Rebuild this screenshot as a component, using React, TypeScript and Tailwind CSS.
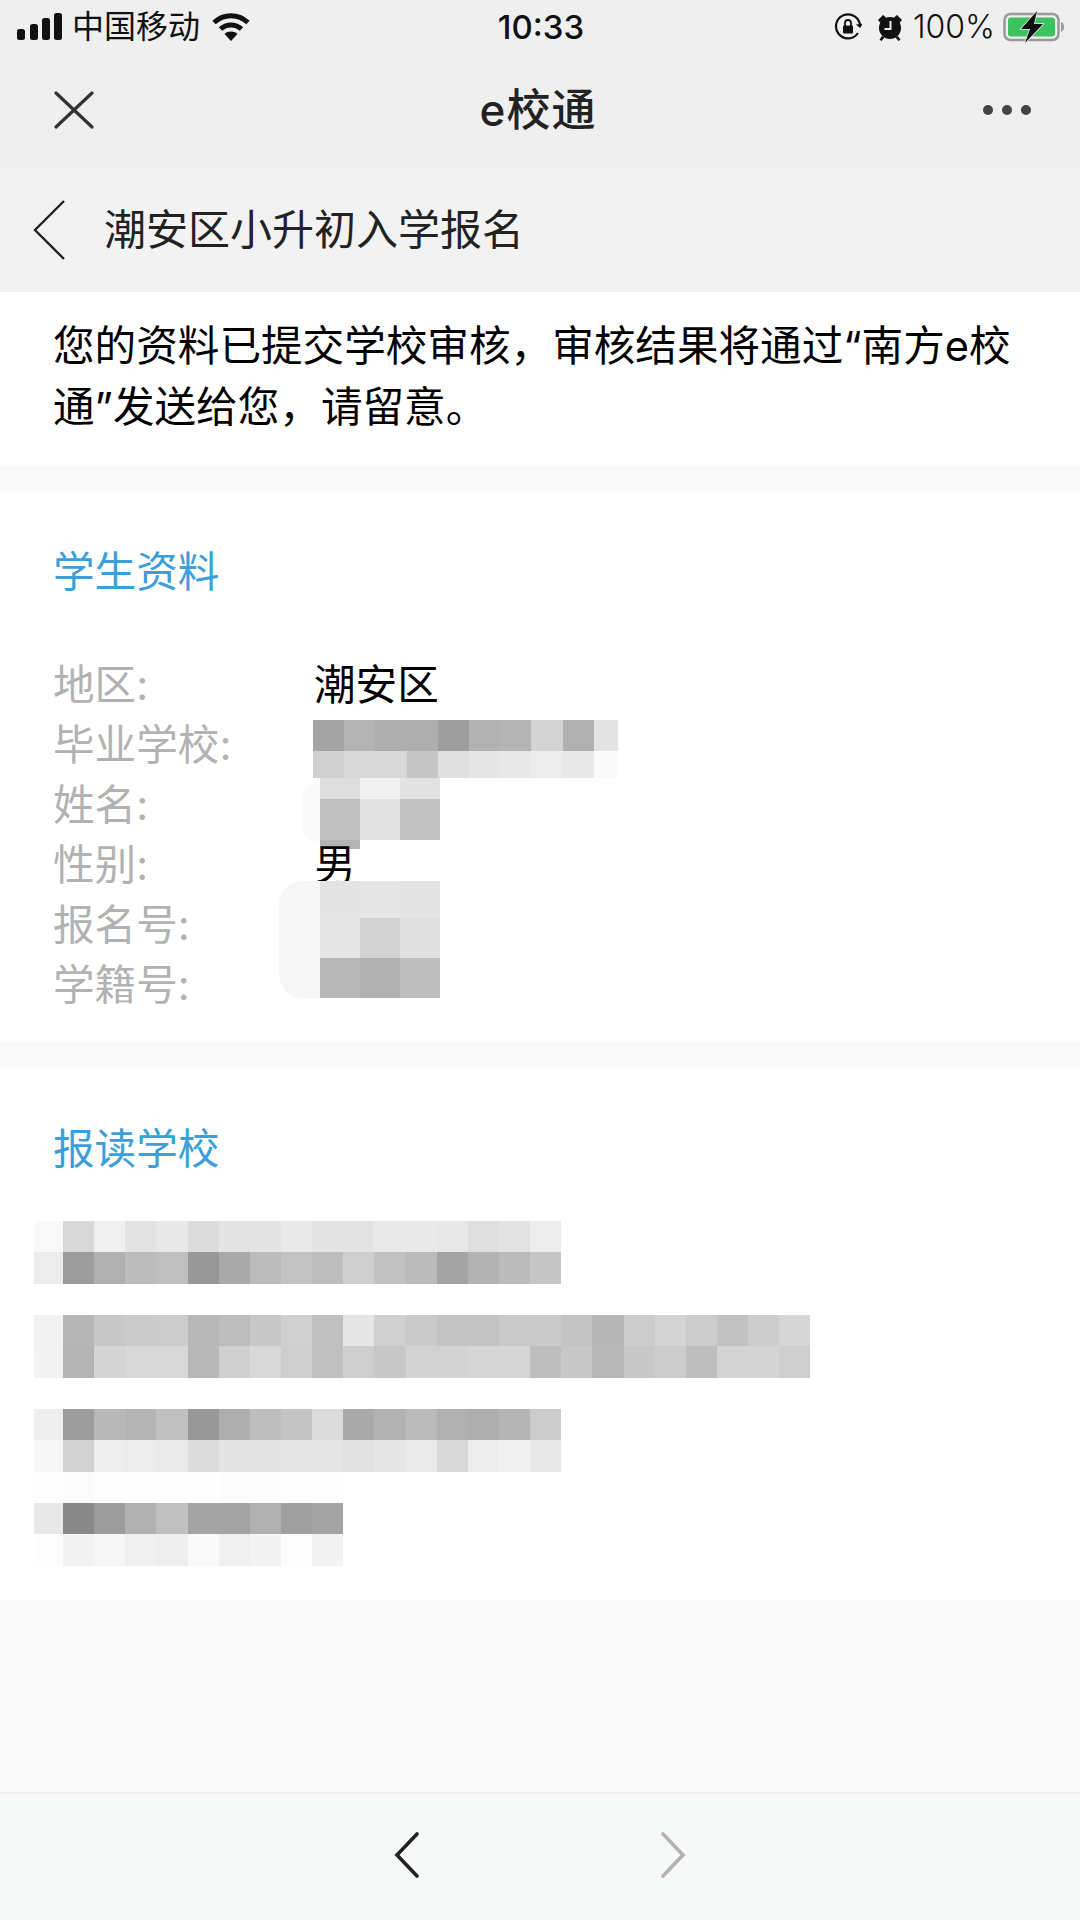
const FONT = "font-['Inter','Noto_Sans_CJK_SC',sans-serif]";

// pixelated school block: each row is a list of gray levels, null row is just a gap
const schoolRows: (string[] | null)[] = [
  ["f9", "d8", "f0", "e3", "e8", "dc", "e4", "e4", "e9", "e3", "e3", "e9", "e9", "e7", "df", "e3", "ec"],
  ["ec", "9c", "b0", "bc", "bf", "98", "a9", "bc", "c3", "bd", "cf", "c1", "bb", "a4", "b2", "bb", "c6"],
  null,
  ["f2", "b6", "c8", "cb", "cc", "b8", "bd", "c8", "d0", "c0", "e6", "d0", "ca", "c4", "c4", "ca", "ca", "c4", "b6", "cc", "d4", "cc", "c2", "cd", "d6"],
  ["f3", "b4", "d4", "d8", "d8", "b8", "cf", "d8", "ce", "c0", "ce", "c8", "d2", "d2", "d6", "d6", "be", "c8", "b8", "c8", "cc", "be", "d4", "d4", "ce"],
  null,
  ["ef", "9c", "b8", "b4", "c0", "98", "ae", "be", "c4", "dc", "aa", "b2", "ba", "b0", "ae", "b4", "cc"],
  ["f7", "d2", "ee", "ec", "ea", "dc", "e4", "e4", "e6", "e6", "e2", "e6", "ea", "d8", "ec", "f0", "e8"],
  ["fe", "fc", "fe", "fd", "fd", "fe", "fc", "fc", "fd", "fd"],
  ["e8", "88", "9c", "b0", "c0", "a4", "a4", "b0", "a0", "a4"],
  ["fd", "f3", "f6", "f0", "ee", "f9", "f0", "f3", "fd", "f3"],
];

const gray = (g: string) => ({ backgroundColor: `#${g}${g}${g}` });

function SchoolRow({ cells }: { cells: string[] | null }) {
  return (
    <div className="flex h-[31.33px]">
      {cells?.map((g, i) => (
        <div key={i} className={i === 0 ? "w-[29px]" : "w-[31.15px]"} style={gray(g)} />
      ))}
    </div>
  );
}

function MosaicRow({ cells, height, width }: { cells: string[]; height: string; width: string }) {
  return (
    <div className={`flex ${height}`}>
      {cells.map((g, i) => (
        <div key={i} className={i === 9 ? "w-[24px]" : width} style={gray(g)} />
      ))}
    </div>
  );
}

function StatusBar() {
  return (
    <div className="grid grid-cols-3 items-center h-[54px] pl-[17px] pr-[15px] text-[#111]">
      <div className="flex items-center">
        <svg width="45" height="28" viewBox="0 0 45 28" fill="#111">
          <rect x="0" y="16" width="8" height="11" rx="2.5" />
          <rect x="13" y="11" width="8" height="16" rx="2.5" />
          <rect x="25" y="5" width="8" height="22" rx="2.5" />
          <rect x="37" y="0" width="8" height="27" rx="2.5" />
        </svg>
        <span className="ml-[10px] text-[32px] leading-[40px]">中国移动</span>
        <svg className="ml-[12px] mb-[1px]" width="38" height="28" viewBox="0 0 38 28" fill="none" stroke="#111" strokeWidth="5">
          <path d="M2 9.5C12 .5 26 .5 36 9.5" />
          <path d="M8.5 16C14.5 10.5 23.5 10.5 29.5 16" />
          <path d="M19 28l-6.5-7c3.5-3.2 9.5-3.2 13 0z" fill="#111" stroke="none" />
        </svg>
      </div>
      <div className="text-center text-[33px] leading-[40px] font-medium">10:33</div>
      <div className="flex items-center justify-end">
        <svg width="28" height="28" viewBox="0 0 28 28" fill="none" stroke="#111" strokeWidth="2.2">
          <path d="M24 20A12 12 0 1 1 26 13" />
          <path d="M22 11.5l4 3.5 3-4.5z" fill="#111" stroke="none" />
          <rect x="9" y="12.5" width="10" height="8" rx="1" fill="#111" stroke="none" />
          <path d="M11 13V10a3 3 0 0 1 6 0v3" strokeWidth="1.8" />
        </svg>
        <svg className="ml-[15px]" width="26" height="28" viewBox="0 0 26 28" fill="#111">
          <circle cx="13" cy="15" r="11" />
          <path d="M1 7l5-5 3 2.5-5.5 5.5zM25 7l-5-5-3 2.5 5.5 5.5zM5 23l-2.5 3.5 2 1.5 3-3.5zM21 23l2.5 3.5-2 1.5-3-3.5z" />
          <path d="M13.5 8v8H7.5" fill="none" stroke="#eee" strokeWidth="2" />
        </svg>
        <span className="ml-[10px] text-[32px] leading-[40px] font-light">100%</span>
        <svg className="ml-[8px]" width="62" height="32" viewBox="0 0 62 32">
          <rect x="1.5" y="3" width="54" height="26" rx="6" fill="none" stroke="#999" strokeWidth="2.5" />
          <rect x="5" y="6.5" width="47" height="19" rx="3" fill="#3cc35f" />
          <path d="M58 11c2 .5 3 2.5 3 5s-1 4.5-3 5z" fill="#999" />
          <path d="M34 0L18 18h9l-5 14 18-19h-9z" fill="#111" stroke="#efefef" strokeWidth="1.5" paintOrder="stroke" />
        </svg>
      </div>
    </div>
  );
}

export default function App() {
  return (
    <div className={`${FONT} w-[1080px] h-[1920px] flex flex-col bg-[#fbfafa] text-black overflow-hidden`}>
      {/* WeChat header */}
      <div className="bg-[#efefef] h-[167px]">
        <StatusBar />
        <div className="flex items-center justify-between h-[113px] pl-[54px] pr-[48px] pb-[1px]">
          <svg width="40" height="38" viewBox="0 0 40 38" fill="none" stroke="#333" strokeWidth="3.2" strokeLinecap="round">
            <path d="M2 2l36 34M38 2L2 36" />
          </svg>
          <span className="text-[44px] leading-[60px] font-medium tracking-[1px] text-[#222]">e校通</span>
          <svg width="50" height="12" viewBox="0 0 50 12" fill="#444">
            <circle cx="6" cy="6" r="5" />
            <circle cx="25" cy="6" r="5" />
            <circle cx="44" cy="6" r="5" />
          </svg>
        </div>
      </div>

      {/* Page title */}
      <div className="flex items-center h-[125px] bg-[#f2f2f2] pl-[33px]">
        <svg width="32" height="60" viewBox="0 0 32 60" fill="none" stroke="#222" strokeWidth="2.4">
          <path d="M31 1L2 30l29 29" />
        </svg>
        <span className="ml-[39px] text-[42px] leading-[60px] text-[#222]">潮安区小升初入学报名</span>
      </div>

      {/* Notice */}
      <div className="bg-white pl-[53px] pr-[50px] pt-[24px] pb-[27px] text-[41.6px] leading-[61px]">
        您的资料已提交学校审核，审核结果将通过“南方e校
        <br />
        通”发送给您，请留意。
      </div>

      {/* Student info */}
      <div className="mt-[27px] bg-white h-[549px] pt-[50px] pl-[53px]">
        <div className="text-[41.6px] leading-[61px] text-[#3d9fd9]">学生资料</div>
        <div className="mt-[52px] flex">
          <div className="w-[261px] flex flex-col text-[41.6px] leading-[60px] text-[#b2b2b2]">
            <span>地区:</span>
            <span>毕业学校:</span>
            <span>姓名:</span>
            <span>性别:</span>
            <span>报名号:</span>
            <span>学籍号:</span>
          </div>
          <div className="flex flex-col text-[41.6px] leading-[60px]">
            <span>潮安区</span>
            <div className="mt-[5px] -ml-[1px]">
              <MosaicRow height="h-[31px]" width="w-[31.2px]" cells={["a4", "b4", "ae", "ae", "9e", "b2", "b4", "d4", "b0", "e4"]} />
              <MosaicRow height="h-[27px]" width="w-[31.2px]" cells={["d0", "d8", "d8", "c6", "e0", "e6", "e8", "ec", "e8", "fa"]} />
            </div>
            <div className="ml-[-12px] flex">
              <div className="w-[18px] h-[62px] mt-[4px] bg-[#fafafa] rounded-l-full" />
              <div>
                <MosaicRow height="h-[21px]" width="w-[40px]" cells={["dd", "f0", "e2"]} />
                <MosaicRow height="h-[41px]" width="w-[40px]" cells={["bf", "e2", "c2"]} />
                <div className="w-[40px] h-[9px] bg-[#b4b4b4]" />
              </div>
            </div>
            <span className="-mt-[14px] h-[46px]">男</span>
            <div className="-ml-[35px] flex">
              <div className="w-[41px] h-[117px] bg-[#f6f6f6] rounded-l-[24px]" />
              <div>
                <MosaicRow height="h-[37px]" width="w-[40px]" cells={["e4", "e6", "e4"]} />
                <MosaicRow height="h-[40px]" width="w-[40px]" cells={["e6", "d2", "e0"]} />
                <MosaicRow height="h-[40px]" width="w-[40px]" cells={["b8", "b0", "be"]} />
              </div>
            </div>
          </div>
        </div>
      </div>

      {/* Chosen school */}
      <div className="mt-[27px] bg-white h-[532px] pt-[51px]">
        <div className="pl-[53px] text-[41.6px] leading-[61px] text-[#3d9fd9]">报读学校</div>
        <div className="mt-[41px] pl-[34px]">
          {schoolRows.map((cells, i) => (
            <SchoolRow key={i} cells={cells} />
          ))}
        </div>
      </div>

      {/* Bottom nav */}
      <div className="mt-auto h-[128px] bg-[#f7f8f8] border-t-2 border-[#eeeeee] flex items-center justify-center gap-[240px] pb-[4px]">
        <svg width="26" height="46" viewBox="0 0 26 46" fill="none" stroke="#222" strokeWidth="3.6" strokeLinecap="round">
          <path d="M23 2L3 23l20 21" />
        </svg>
        <svg width="26" height="46" viewBox="0 0 26 46" fill="none" stroke="#b2b2b2" strokeWidth="3.6" strokeLinecap="round">
          <path d="M3 2l20 21L3 44" />
        </svg>
      </div>
    </div>
  );
}
